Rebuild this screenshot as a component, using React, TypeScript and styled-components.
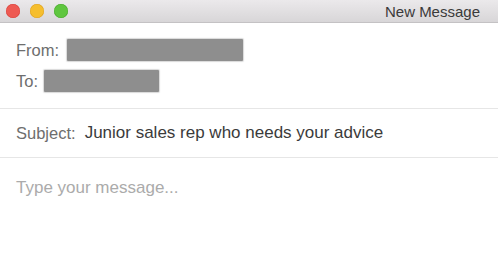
import React from 'react';
import styled, { createGlobalStyle } from 'styled-components';

const GlobalStyle = createGlobalStyle`
  html, body {
    margin: 0;
    padding: 0;
    background: #fff;
  }
  body {
    font-family: "Liberation Sans", Arial, sans-serif;
  }
`;

const Window = styled.div`
  width: 498px;
  height: 272px;
  display: flex;
  flex-direction: column;
  background: #fff;
  overflow: hidden;
`;

const TitleBar = styled.div`
  height: 22px;
  flex-shrink: 0;
  display: flex;
  align-items: center;
  padding: 0 18px 0 6px;
  background: linear-gradient(#ebe9eb, #d8d6d8);
  border-bottom: 1px solid #c4c2c4;
`;

const Lights = styled.div`
  display: flex;
  gap: 10px;
`;

const Light = styled.span<{ $color: string; $edge: string }>`
  width: 14px;
  height: 14px;
  border-radius: 50%;
  background: ${p => p.$color};
  box-shadow: inset 0 0 0 0.5px ${p => p.$edge};
`;

const Title = styled.div`
  margin-left: auto;
  font-size: 15px;
  color: #3a3a3a;
`;

const Header = styled.div`
  display: flex;
  flex-direction: column;
  gap: 9px;
  padding: 16px 16px 16px;
  border-bottom: 1px solid #e6e6e6;
`;

const Row = styled.div<{ $gap: number }>`
  display: flex;
  align-items: center;
  gap: ${p => p.$gap}px;
`;

const Label = styled.span`
  font-size: 16.5px;
  color: #6e6e6e;
`;

const Redacted = styled.span<{ $width: number }>`
  display: inline-block;
  width: ${p => p.$width}px;
  height: 22px;
  background: #8e8e8e;
  border-radius: 1px;
  box-shadow: 0 0 1px 1px rgba(142, 142, 142, 0.35);
`;

const SubjectRow = styled.div`
  display: flex;
  align-items: center;
  gap: 9px;
  height: 48px;
  padding: 0 16px;
  border-bottom: 1px solid #e6e6e6;
`;

const SubjectText = styled.span`
  font-size: 17px;
  color: #3b3b3b;
`;

const Body = styled.div`
  flex: 1;
  padding: 20px 16px;
  font-size: 17px;
  color: #ababab;
`;

export default function App() {
  return (
    <>
      <GlobalStyle />
      <Window>
        <TitleBar>
          <Lights>
            <Light $color="#ee5a52" $edge="#d8443e" />
            <Light $color="#f5be2e" $edge="#dea123" />
            <Light $color="#5fc63f" $edge="#4aa92f" />
          </Lights>
          <Title>New Message</Title>
        </TitleBar>
        <Header>
          <Row $gap={8}>
            <Label>From:</Label>
            <Redacted $width={176} />
          </Row>
          <Row $gap={6}>
            <Label>To:</Label>
            <Redacted $width={115} />
          </Row>
        </Header>
        <SubjectRow>
          <Label>Subject:</Label>
          <SubjectText>Junior sales rep who needs your advice</SubjectText>
        </SubjectRow>
        <Body>Type your message...</Body>
      </Window>
    </>
  );
}
